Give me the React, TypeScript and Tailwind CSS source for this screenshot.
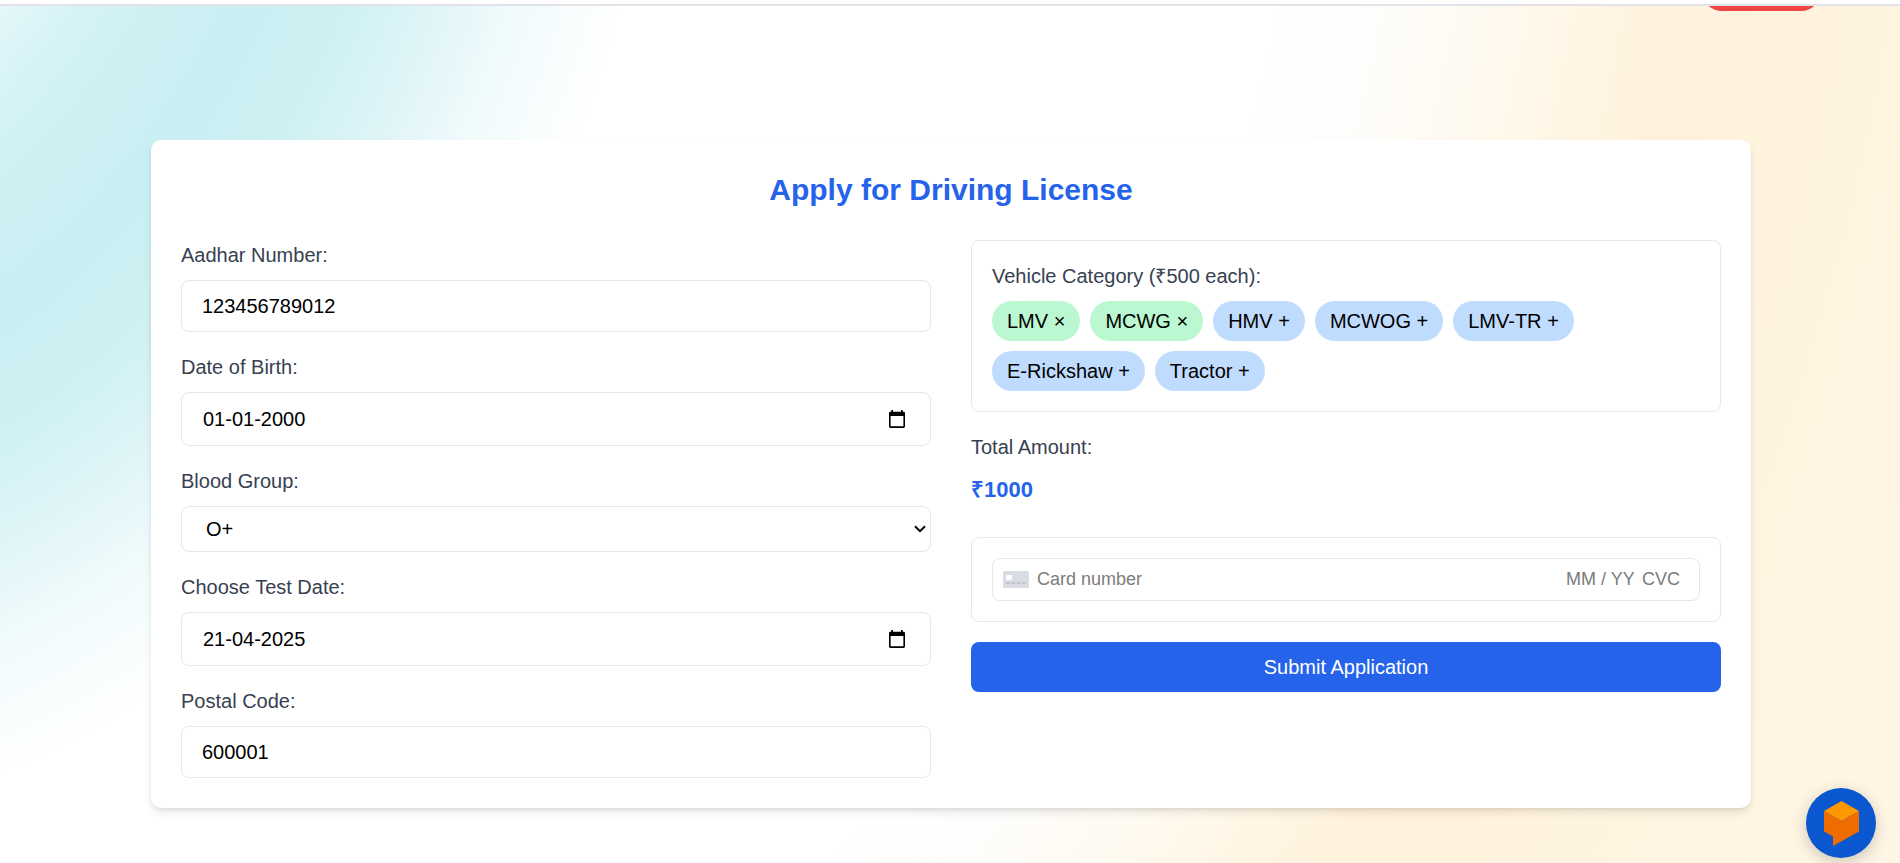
import { useState } from "react";
import type { ReactNode } from "react";

const categories = ["LMV", "MCWG", "HMV", "MCWOG", "LMV-TR", "E-Rickshaw", "Tractor"];
const bloodGroups = ["A+", "A-", "B+", "B-", "AB+", "AB-", "O+", "O-"];
const FEE = 500;

function Field({ id, label, children }: { id: string; label: string; children: ReactNode }) {
  return (
    <div>
      <label htmlFor={id} className="mb-2.5 block text-[20px] leading-[30px] text-[#374151]">
        {label}
      </label>
      {children}
    </div>
  );
}

function CalendarIcon() {
  return (
    <svg viewBox="0 0 16 18" className="h-[18px] w-4" fill="none" aria-hidden="true">
      <path
        d="M2.300 0h1.700v1.700h8V0h1.700v1.700H14.600A1.400 1.400 0 0 1 16 3.100v13.400a1.400 1.400 0 0 1-1.400 1.400H1.400A1.400 1.400 0 0 1 0 16.500V3.100a1.400 1.400 0 0 1 1.400-1.400h.9zM1.600 6v10.300h12.800V6z"
        fill="#000"
        fillRule="evenodd"
      />
    </svg>
  );
}

function DateInput({ id, initial }: { id: string; initial: string }) {
  const [value, setValue] = useState(initial);
  return (
    <div className="flex h-[54px] items-center rounded-lg border border-[#e5e7eb] pr-[25px] pl-5">
      <input
        id={id}
        value={value}
        onChange={(e) => setValue(e.target.value)}
        placeholder="dd-mm-yyyy"
        className="min-w-0 grow pl-px text-[20px] leading-[30px] text-black outline-none"
      />
      <button type="button" aria-label="Open calendar">
        <CalendarIcon />
      </button>
    </div>
  );
}

function CardIcon() {
  return (
    <svg viewBox="0 0 26 17" className="h-[17px] w-[26px] shrink-0" aria-hidden="true">
      <rect width="26" height="17" rx="1.6" fill="#d9dce5" />
      <rect x="3" y="4" width="6" height="5" rx="1" fill="#fff" />
      <path d="M3 12.2h4M8.300 12.2h4M13.600 12.2h4M18.900 12.2h4" stroke="#b4b8c6" strokeWidth="1.3" />
    </svg>
  );
}

export default function App() {
  const [selected, setSelected] = useState(["LMV", "MCWG"]);
  const toggle = (name: string) =>
    setSelected((s) => (s.includes(name) ? s.filter((n) => n !== name) : [...s, name]));
  const textInput =
    "block h-[52px] w-full rounded-lg border border-[#e5e7eb] px-5 text-[20px] leading-[30px] text-black outline-none";

  return (
    <div className="flex min-h-screen flex-col bg-white font-['Liberation_Sans',Arial,sans-serif]">
      <header className="h-1.5 border-b-2 border-[#e2e2e8] bg-white" />
      <div className="flex grow flex-col bg-[radial-gradient(945px_1192px_at_-300px_-400px,#e6f8fa_46%,#d6f3f6_52%,#cdf0f3_60%,#caeff2_67%,#cef1f3_76%,#e0f5f8_85%,#f1fbfc_93%,#ffffff00_103%),radial-gradient(2613px_2816px_at_-300px_-400px,#ffffff_62%,#fefdfb_66%,#fffaf0_70%,#fff5e3_74%,#fff2dc_77%,#fff4e0_85%,#fff6e5_95%)]">
        <div className="flex h-[5px] items-end justify-end overflow-hidden pr-[79px]">
          <button type="button" aria-label="Logout" className="h-10 w-[119px] shrink-0 rounded-full bg-[#ef4444]" />
        </div>
        <main className="pt-[129px] pr-6 pb-[54px] pl-[26px]">
          <section className="mx-auto max-w-[1600px] rounded-[10px] bg-white p-[30px] shadow-[0_5px_8px_-1px_rgba(0,0,0,0.1),0_2px_5px_-2px_rgba(0,0,0,0.1)]">
            <h1 className="mb-[30px] text-center text-[30px] leading-10 font-bold text-[#2563eb]">
              Apply for Driving License
            </h1>
            <form className="grid grid-cols-2 items-start gap-10" onSubmit={(e) => e.preventDefault()}>
              <div className="flex flex-col gap-5">
                <Field id="aadhar" label="Aadhar Number:">
                  <input id="aadhar" defaultValue="123456789012" className={textInput} />
                </Field>
                <Field id="dob" label="Date of Birth:">
                  <DateInput id="dob" initial="01-01-2000" />
                </Field>
                <Field id="blood" label="Blood Group:">
                  <div className="relative">
                    <select
                      id="blood"
                      defaultValue="O+"
                      className="block h-[46px] w-full appearance-none rounded-lg border border-[#e5e7eb] bg-white pl-6 text-[20px] leading-[30px] text-black outline-none"
                    >
                      {bloodGroups.map((g) => (
                        <option key={g}>{g}</option>
                      ))}
                    </select>
                    <svg
                      viewBox="0 0 12 8"
                      className="pointer-events-none absolute inset-y-0 right-[5px] my-auto h-2 w-3"
                      fill="none"
                      stroke="#000"
                      strokeWidth="2"
                      aria-hidden="true"
                    >
                      <path d="M1 1.200 6 6.200l5-5" />
                    </svg>
                  </div>
                </Field>
                <Field id="test-date" label="Choose Test Date:">
                  <DateInput id="test-date" initial="21-04-2025" />
                </Field>
                <Field id="postal" label="Postal Code:">
                  <input id="postal" defaultValue="600001" className={textInput} />
                </Field>
              </div>

              <div>
                <div className="mb-5 rounded-lg border border-[#e5e7eb] p-5">
                  <p className="mb-2.5 text-[20px] leading-[30px] text-[#374151]">Vehicle Category (₹{FEE} each):</p>
                  <div className="flex flex-wrap gap-2.5">
                    {categories.map((name) => {
                      const on = selected.includes(name);
                      return (
                        <button
                          key={name}
                          type="button"
                          aria-pressed={on}
                          onClick={() => toggle(name)}
                          className={`h-10 rounded-full px-[15px] text-[20px] leading-[30px] text-black ${on ? "bg-[#bbf7d0]" : "bg-[#bfdbfe]"}`}
                        >
                          {name} {on ? "×" : "+"}
                        </button>
                      );
                    })}
                  </div>
                </div>
                <p className="mb-2.5 text-[20px] leading-[30px] text-[#374151]">Total Amount:</p>
                <p className="mb-[30px] text-[22px] leading-[35px] font-bold text-[#2563eb]">₹{selected.length * FEE}</p>
                <div className="mb-5 rounded-lg border border-[#e5e7eb] p-5">
                  <div className="flex h-[43px] items-center rounded-lg border border-[#e5e7eb] pr-[18px] pl-2.5 text-[18px]">
                    <CardIcon />
                    <input
                      aria-label="Card number"
                      placeholder="Card number"
                      className="ml-2 min-w-0 grow outline-none placeholder:text-[#7c7c7c]"
                    />
                    <input
                      aria-label="Expiry date"
                      placeholder="MM / YY"
                      className="w-[68px] outline-none placeholder:text-[#7c7c7c]"
                    />
                    <input
                      aria-label="CVC"
                      placeholder="CVC"
                      className="ml-2 w-[39px] outline-none placeholder:text-[#7c7c7c]"
                    />
                  </div>
                </div>
                <button
                  type="submit"
                  className="h-[50px] w-full rounded-lg bg-[#2563eb] text-[20px] leading-[30px] text-white"
                >
                  Submit Application
                </button>
              </div>
            </form>
          </section>
        </main>
      </div>
      <button
        type="button"
        aria-label="Open chat"
        className="fixed right-6 bottom-[5px] size-[70px] rounded-full bg-[#0b57d0] shadow-[0_4px_16px_rgba(0,0,0,0.2)]"
      >
        <svg viewBox="0 0 70 70" className="size-full" aria-hidden="true">
          <path d="M18 23 35.500 33 53 23V43.500L27 58V48.500L18 43.500z" fill="#ef6c00" />
          <path d="M35.500 13 53 23 35.500 33 18 23z" fill="#ff9800" />
        </svg>
      </button>
    </div>
  );
}
